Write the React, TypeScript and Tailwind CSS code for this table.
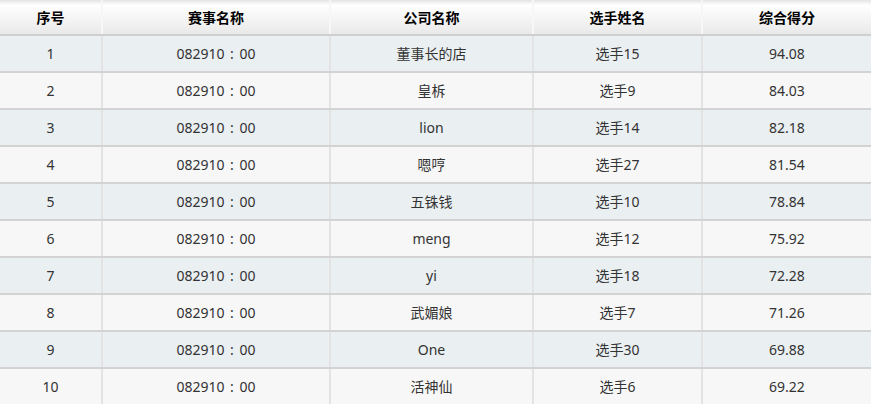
const rows = [
  { no: 1, company: "董事长的店", player: "选手15", score: "94.08" },
  { no: 2, company: "皇柝", player: "选手9", score: "84.03" },
  { no: 3, company: "lion", player: "选手14", score: "82.18" },
  { no: 4, company: "嗯哼", player: "选手27", score: "81.54" },
  { no: 5, company: "五铢钱", player: "选手10", score: "78.84" },
  { no: 6, company: "meng", player: "选手12", score: "75.92" },
  { no: 7, company: "yi", player: "选手18", score: "72.28" },
  { no: 8, company: "武媚娘", player: "选手7", score: "71.26" },
  { no: 9, company: "One", player: "选手30", score: "69.88" },
  { no: 10, company: "活神仙", player: "选手6", score: "69.22" },
];

// column widths, last one takes the rest
const cols = ["w-[103px]", "w-[228px]", "w-[203px]", "w-[169px]", "flex-1"];

function Cell({ i, children, header }: { i: number; children: React.ReactNode; header?: boolean }) {
  const last = i === cols.length - 1;
  return (
    <div
      className={`${cols[i]} flex items-center justify-center ${last ? "" : header ? "border-r-2 border-[#f7f7f7]" : "border-r-2 border-[#e3e3e3]"}`}
    >
      {children}
    </div>
  );
}

export default function App() {
  return (
    <div
      className="w-[871px] h-[404px] overflow-hidden bg-[#f7f7f7] text-[14px] text-[#333]"
      style={{ fontFamily: '"Noto Sans", "Noto Sans CJK SC", sans-serif' }}
    >
      <div className="flex h-[36px] border-b-2 border-[#cfcfcf] bg-gradient-to-b from-[#e4e4e4] via-white via-[15%] to-[#e9e9e9] font-bold text-black">
        {["序号", "赛事名称", "公司名称", "选手姓名", "综合得分"].map((t, i) => (
          <Cell key={t} i={i} header>
            {t}
          </Cell>
        ))}
      </div>
      {rows.map((r, idx) => (
        <div
          key={r.no}
          className={`flex h-[37px] border-b-2 border-[#d3d3d3] ${idx % 2 === 0 ? "bg-[#eaeff2]" : "bg-[#f7f7f7]"}`}
        >
          <Cell i={0}>{r.no}</Cell>
          <Cell i={1}>
            <span>
              082910<span className="mx-[2px]"> : </span>00
            </span>
          </Cell>
          <Cell i={2}>{r.company}</Cell>
          <Cell i={3}>{r.player}</Cell>
          <Cell i={4}>{r.score}</Cell>
        </div>
      ))}
    </div>
  );
}
